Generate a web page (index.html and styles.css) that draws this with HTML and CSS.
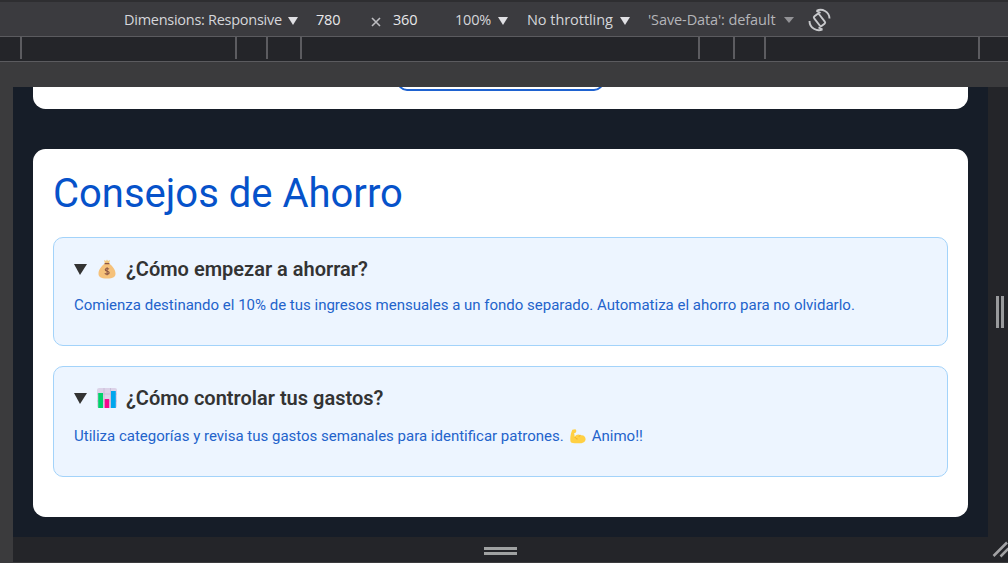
FILE: index.html
```html
<!DOCTYPE html>
<html lang="es">
<head>
<meta charset="utf-8">
<title>Consejos de Ahorro</title>
<link rel="stylesheet" href="styles.css">
</head>
<body>
<header class="toolbar">
  <div class="tool dimensions"><span>Dimensions: Responsive</span><i class="arrow"></i></div>
  <div class="tool value">780</div>
  <div class="tool times"><svg width="10" height="10" viewBox="0 0 10 10"><path d="M1 1l8 8M9 1L1 9"/></svg></div>
  <div class="tool value">360</div>
  <div class="tool zoom"><span>100%</span><i class="arrow"></i></div>
  <div class="tool throttling"><span>No throttling</span><i class="arrow"></i></div>
  <div class="tool savedata"><span>'Save-Data': default</span><i class="arrow"></i></div>
  <div class="tool rotate">
    <svg width="24" height="24" viewBox="0 0 24 24"><rect x="8.300" y="6" width="6.400" height="12" rx="1.500" transform="rotate(-38 11.500 12)"/><path d="M8.500 2.800C14 0 21.300 3.500 21.500 10.500M8.500 2.800l4 2.200M14.500 21.500C9 24 1.500 20 1.500 13M14.500 21.500l-4-2.200"/></svg>
  </div>
</header>
<div class="ruler"><i></i><i></i><i></i><i></i><i></i><i></i><i></i><i></i></div>
<main class="stage">
  <div class="device">
    <section class="card card-top"><div class="outline-button"></div></section>
    <section class="card tips">
      <h1>Consejos de Ahorro</h1>
      <article class="tip">
        <h2><i class="marker"></i>
          <svg class="emoji" width="20" height="20" viewBox="0 0 20 20"><path d="M7 1l2 1 1-1.5L11 2l2-1-1 4H8z" fill="#f3c77b"/><path d="M7.700 4.800h4.600c3 2 6.200 6 6.200 9.600 0 3.400-2 5-8.500 5s-8.500-1.600-8.500-5c0-3.600 3.200-7.600 6.200-9.600z" fill="#f5c17a"/><path d="M7.600 4.600h4.800" stroke="#8c5543" stroke-width="1.300"/><path d="M12 10.200c-.8-.9-3.800-1.200-3.800.6 0 2 4 1 4 2.900 0 1.800-3.400 1.700-4.400.6M10.100 8.200v8" fill="none" stroke="#8c5543" stroke-width="1.100"/></svg>
          <span>¿Cómo empezar a ahorrar?</span></h2>
        <p>Comienza destinando el 10% de tus ingresos mensuales a un fondo separado. Automatiza el ahorro para no olvidarlo.</p>
      </article>
      <article class="tip tip-tall">
        <h2><i class="marker"></i>
          <svg class="emoji" width="20" height="20" viewBox="0 0 20 20"><rect width="20" height="20" rx="2" fill="#dcd2e8"/><path d="M0 6h20M0 13h20M7 0v20M13.500 0v20" stroke="#c4b9d4" stroke-width=".8"/><path d="M1.200 5h4.800v15H1.200z" fill="#00d26a"/><path d="M7.700 11h4.500v9H7.700z" fill="#f70a8d"/><path d="M14 3h4.800v17H14z" fill="#00a6ed"/></svg>
          <span>¿Cómo controlar tus gastos?</span></h2>
        <p>Utiliza categorías y revisa tus gastos semanales para identificar patrones. <svg class="muscle" width="16" height="15" viewBox="0 0 16 15"><path d="M2.300.8l3-.5c1.200.3 1.500 3-.1 3.700l-1-.1.500 3.900c1.600-2.400 4-3 5.800-1.500C14 5.500 16 8 15.500 11c-.5 2.500-3 3.300-6.500 3.300-4 0-7 .2-8.300-1.300C-.3 10.500.6 4.500 2.300.8z" fill="#ffd044"/><path d="M5 8c.4 1.400 1.500 2 2.600 2M10.500 6.300c-.8.200-1.300.7-1.600 1.400" fill="none" stroke="#edaa25" stroke-width=".9"/></svg> Animo!!</p>
      </article>
    </section>
  </div>
  <div class="handle handle-right"><i></i><i></i></div>
  <div class="handle handle-bottom"><i></i><i></i></div>
  <div class="handle handle-corner"><svg width="20" height="25" viewBox="0 0 20 25"><path d="M5.500 19L19 5.500M12.500 19.500l8-8"/></svg></div>
</main>
</body>
</html>
```
FILE: styles.css
```css
* { box-sizing: border-box; }

body {
  margin: 0;
  width: 1008px;
  height: 563px;
  overflow: hidden;
  background: #3b3b3d;
  font-family: Roboto, "Liberation Sans", sans-serif;
}

.toolbar {
  height: 37px;
  padding: 2px 0 0 124px;
  border-top: 2px solid #2e2e31;
  border-bottom: 1px solid #5b5b5f;
  background: #3b3b3f;
  display: grid;
  grid-template-columns: 192px 55px 22px 62px 72px 121px 160px 24px;
  align-items: center;
  color: #d5d6da;
  font: 14.5px/20px "Open Sans", "Noto Sans", sans-serif;
  white-space: nowrap;
}
.tool { display: flex; align-items: center; justify-content: space-between; }
.value { color: #e8e8ea; letter-spacing: -.2px; }
.dimensions { width: 174px; letter-spacing: -.27px; }
.zoom { width: 53px; letter-spacing: -.2px; }
.throttling { width: 103px; letter-spacing: -.05px; }
.savedata { width: 146px; color: #b4b5b9; letter-spacing: -.1px; }
.arrow {
  border: 5px solid transparent;
  border-top: 8px solid #e0e0e4;
  border-bottom: 0;
  margin-top: 2px;
}
.savedata .arrow { border-top: 6px solid #929296; margin-top: 0; }
.times svg { margin-top: 4px; fill: none; stroke: #bdbdc1; stroke-width: 1.6; }
.rotate svg { fill: none; stroke: #c8c9cc; stroke-width: 1.9; }

.ruler {
  height: 25px;
  background: #242529;
  border-bottom: 1px solid #5b5b5f;
  display: grid;
  grid-template-columns: 215px 31px 34px 398px 35px 31px 214px 2px;
  padding-left: 20px;
}
.ruler i { width: 2px; height: 22px; background: #5c5c60; }

.stage {
  height: 501px;
  padding: 25px 0 1px 13px;
  display: grid;
  grid-template-columns: 975px 20px;
  grid-template-rows: 450px 25px;
}
.device { background: #161d28; padding: 0 20px; overflow: hidden; }
.card { background: #fff; border-radius: 12.5px; }
.card-top { height: 22px; margin-bottom: 40px; border-radius: 0 0 12.5px 12.5px; overflow: hidden; }
.outline-button {
  width: 207px;
  height: 40px;
  margin: -36.5px 0 0 364px;
  border: 2px solid #1e62d0;
  border-radius: 10px;
}
.tips { height: 368px; padding: 21px 20px 20px; }
h1 {
  margin: 0 0 19px;
  font-size: 40px;
  line-height: 48px;
  font-weight: 400;
  color: #0652ca;
}
.tip {
  height: 109px;
  padding: 19px 20px 20px;
  margin-bottom: 20px;
  border: 1px solid #a3d3fa;
  border-radius: 10px;
  background: #edf5ff;
}
.tip-tall { height: 111px; }
h2 {
  margin: 0;
  display: flex;
  align-items: center;
  height: 23px;
  color: #333;
  font-size: 20px;
  font-weight: 600;
}
.marker {
  border: 6.5px solid transparent;
  border-width: 11px 7px 0 6px;
  border-top-color: #333;
  margin-top: 2px;
}
.emoji { margin: 0 9px 0 10px; }
p {
  margin: 15px 0 0;
  font-size: 15px;
  line-height: 20px;
  color: #2363cb;
  white-space: nowrap;
}
.tip-tall p { margin-top: 17px; }
.muscle { margin: 0 2.5px 0 2px; vertical-align: -3px; }

.handle { background: #242529; display: flex; }
.handle-right { padding: 209px 0 0 8px; gap: 2px; }
.handle-right i { width: 3px; height: 32px; background: #999a9c; }
.handle-bottom { flex-direction: column; align-items: center; padding-top: 10px; gap: 2px; }
.handle-bottom i { width: 33px; height: 3px; background: #a0a2a2; }
.handle-corner svg { fill: none; stroke: #a2a2a4; stroke-width: 2.5; }
```
